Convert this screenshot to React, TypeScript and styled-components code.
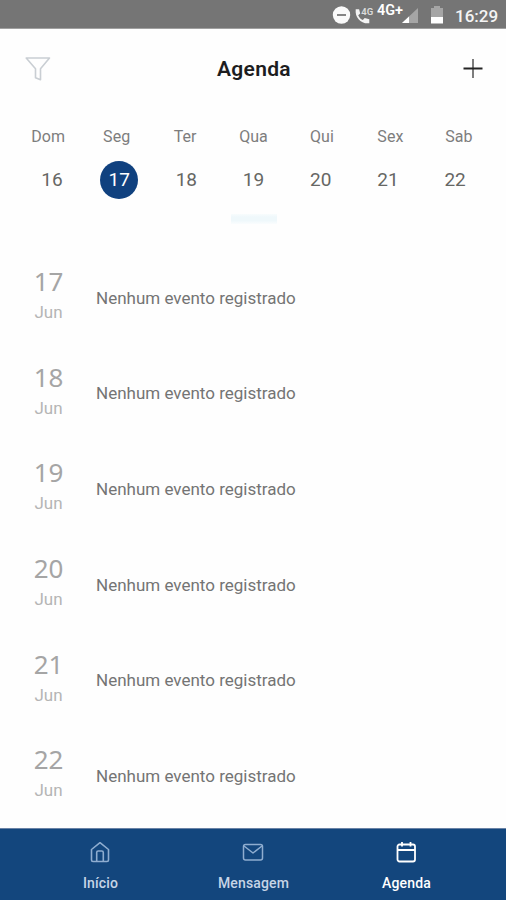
import React from "react";
import styled, { createGlobalStyle } from "styled-components";

const GlobalStyle = createGlobalStyle`
  * { box-sizing: border-box; }
  body { margin: 0; background: #fefefe; font-family: Roboto, "Liberation Sans", sans-serif; }
`;

const Screen = styled.div`
  width: 506px;
  height: 900px;
  display: flex;
  flex-direction: column;
  overflow: hidden;
  background: #fefefe;
`;

const StatusBar = styled.div`
  height: 29px;
  flex: none;
  display: flex;
  align-items: center;
  justify-content: flex-end;
  padding: 0 8px 0 0;
  background: #757575;
  border-bottom: 1px solid #a0a0a0;
  color: #fff;
`;

const StatusIcons = styled.svg`
  width: 116px;
  height: 28px;
  flex: none;
  display: block;
`;

const Clock = styled.span`
  width: 43px;
  margin-left: 7px;
  font-size: 17px;
  font-weight: 500;
  line-height: 28px;
  padding-top: 3px;
  white-space: nowrap;
  color: #f4f4f4;
`;

const Header = styled.header`
  height: 80px;
  flex: none;
  display: grid;
  grid-template-columns: 60px 1fr 50px;
  align-items: center;
  padding: 0 8px;
`;

const HeaderIcon = styled.svg`
  width: 28px;
  height: 28px;
  display: block;
  justify-self: center;
`;

const Title = styled.h1`
  margin: 0 8px 0 0;
  font-size: 21px;
  font-weight: 600;
  line-height: 28px;
  letter-spacing: 0.3px;
  text-align: center;
  color: #1d1d1f;
`;

const Weekdays = styled.div`
  height: 54px;
  flex: none;
  display: grid;
  grid-template-columns: repeat(7, 68.45px);
  padding: 17px 0 0 14px;
  font-size: 16px;
  line-height: 22px;
  letter-spacing: 0.05px;
  text-align: center;
  color: #7d7d7d;
`;

const Dates = styled.div`
  height: 50px;
  flex: none;
  display: grid;
  grid-template-columns: repeat(7, 67.2px);
  justify-items: center;
  padding: 0 0 0 18.4px;
  margin-top: -2px;
`;

const DateCell = styled.div<{ $selected?: boolean }>`
  width: 38px;
  height: 38px;
  border-radius: 50%;
  font-size: 19px;
  line-height: 38px;
  text-align: center;
  color: ${(p) => (p.$selected ? "#fff" : "#666764")};
  background: ${(p) => (p.$selected ? "#10417f" : "transparent")};
`;

const Knob = styled.div`
  width: 46px;
  height: 10px;
  flex: none;
  margin: 3px 229px 0 231px;
  background: linear-gradient(#f8fcfd, #eff8fb 30% 65%, #fafdfe);
`;

const EventList = styled.main`
  flex: 1;
  min-height: 0;
  padding-top: 26px;
  overflow: hidden;
`;

const EventRow = styled.div`
  height: 95.6px;
  display: flex;
  align-items: center;
`;

const EventDate = styled.div`
  width: 96px;
  padding: 0 0 6px 1px;
  text-align: center;
`;

const DayNumber = styled.div`
  margin-bottom: 1px;
  font-family: "Noto Sans", Roboto, sans-serif;
  font-size: 26px;
  line-height: 34px;
  color: #a5a5a5;
`;

const Month = styled.div`
  font-size: 17px;
  line-height: 26px;
  color: #b5b5b5;
`;

const EventText = styled.div`
  font-size: 17px;
  line-height: 24px;
  white-space: nowrap;
  color: #747474;
`;

const TabBar = styled.nav`
  height: 72px;
  flex: none;
  display: grid;
  grid-template-columns: repeat(3, 153px);
  justify-content: center;
  background: #13467d;
  border-top: 1px solid #6a83a6;
`;

const Tab = styled.div<{ $active?: boolean }>`
  display: flex;
  flex-direction: column;
  align-items: center;
  padding: 11px 0 0 1px;
  color: ${(p) => (p.$active ? "#fff" : "#8fadd0")};
`;

const TabIcon = styled.svg`
  width: 24px;
  height: 24px;
  display: block;
  margin-left: -1px;
  fill: none;
  stroke: currentColor;
`;

const TabLabel = styled.span<{ $active?: boolean }>`
  margin-top: 9px;
  font-size: 14px;
  font-weight: 500;
  line-height: 20px;
  letter-spacing: 0.15px;
  color: ${(p) => (p.$active ? "#fff" : "#c6d4e6")};
`;

const StatusText = styled.text`
  font-family: Roboto, sans-serif;
  font-weight: 600;
  fill: #fff;
`;

const weekdays = ["Dom", "Seg", "Ter", "Qua", "Qui", "Sex", "Sab"];
const dates = [16, 17, 18, 19, 20, 21, 22];
const events = [17, 18, 19, 20, 21, 22];

export default function App() {
  return (
    <Screen>
      <GlobalStyle />
      <StatusBar>
        <StatusIcons viewBox="332 0 116 28">
          <circle cx="341.5" cy="15" r="8.7" fill="#fafafa" />
          <path d="M337 15h9" stroke="#858585" strokeWidth="2" />
          <path
            d="M355.7 9.2h3.4l1.1 4.2-2 1.8c1.1 2.4 2.4 3.8 4.6 4.9l1.9-2 4.6 1.2v4c-8.4.8-14.5-5.5-13.6-14.1Z"
            fill="#f4f4f4"
          />
          <StatusText x="361.3" y="15.2" fontSize="9.5" opacity=".75">4G</StatusText>
          <StatusText x="377" y="15" fontSize="14" textLength="26" lengthAdjust="spacingAndGlyphs">4G+</StatusText>
          <path d="M418 8v15h-16Z" fill="#a5a5a5" />
          <path d="M409 16.5V23h-7Z" fill="#fff" />
          <path d="M434 6h6v2h3v10h-12V8h3Z" fill="#a5a5a5" />
          <path d="M431 17h12v6.5h-12Z" fill="#fff" />
        </StatusIcons>
        <Clock>16:29</Clock>
      </StatusBar>

      <Header>
        <HeaderIcon viewBox="0 0 28 28" fill="none">
          <path
            d="M2.2 3H25.5L16.5 13.7V24.8L11.5 22.8V13.7Z"
            stroke="#c9ced3"
            strokeWidth="1.6"
            strokeLinejoin="round"
          />
        </HeaderIcon>
        <Title>Agenda</Title>
        <HeaderIcon viewBox="0 0 28 28" fill="none">
          <path d="M14 4v19" stroke="#7d7d7d" strokeWidth="2" />
          <path d="M4.5 13.5h19" stroke="#242424" strokeWidth="2" />
        </HeaderIcon>
      </Header>

      <Weekdays>
        {weekdays.map((d) => (
          <span key={d}>{d}</span>
        ))}
      </Weekdays>
      <Dates>
        {dates.map((d) => (
          <DateCell key={d} $selected={d === 17}>
            {d}
          </DateCell>
        ))}
      </Dates>
      <Knob />

      <EventList>
        {events.map((d) => (
          <EventRow key={d}>
            <EventDate>
              <DayNumber>{d}</DayNumber>
              <Month>Jun</Month>
            </EventDate>
            <EventText>Nenhum evento registrado</EventText>
          </EventRow>
        ))}
      </EventList>

      <TabBar>
        <Tab>
          <TabIcon viewBox="0 0 24 24" strokeWidth="1.6" strokeLinejoin="round">
            <path d="M3.5 9.5 12 2.7l8.5 6.8V20a1.5 1.5 0 0 1-1.5 1.5H5A1.5 1.5 0 0 1 3.5 20Z" />
            <path d="M8.7 21.5V12.5a1.5 1.5 0 0 1 1.5-1.5h3.6a1.5 1.5 0 0 1 1.5 1.5v9" />
          </TabIcon>
          <TabLabel>Início</TabLabel>
        </Tab>
        <Tab>
          <TabIcon viewBox="0 0 24 24" strokeWidth="1.5" strokeLinejoin="round">
            <rect x="2.5" y="4.5" width="19" height="15.5" rx="2" />
            <path d="m3 6 9 7 9-7" />
          </TabIcon>
          <TabLabel>Mensagem</TabLabel>
        </Tab>
        <Tab $active>
          <TabIcon viewBox="0 0 24 24" strokeWidth="1.8" strokeLinejoin="round">
            <rect x="3.5" y="4.5" width="17.5" height="17" rx="2" />
            <path d="M3.5 10H21M8 2v4.5M16.5 2v4.5" />
          </TabIcon>
          <TabLabel $active>Agenda</TabLabel>
        </Tab>
      </TabBar>
    </Screen>
  );
}
